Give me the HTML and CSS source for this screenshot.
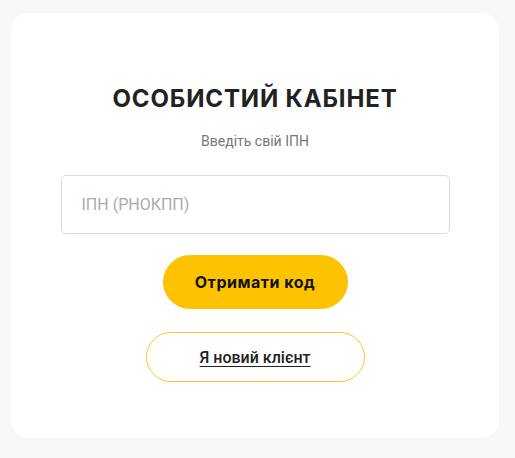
FILE: index.html
```html
<!DOCTYPE html>
<html lang="uk">
<head>
<meta charset="utf-8">
<title>Особистий кабінет</title>
<link rel="stylesheet" href="styles.css">
</head>
<body>
<main class="card">
  <h1 class="title">ОСОБИСТИЙ КАБІНЕТ</h1>
  <p class="subtitle">Введіть свій ІПН</p>
  <input class="field" type="text" placeholder="ІПН (РНОКПП)">
  <button class="btn-primary" type="button">Отримати код</button>
  <a class="btn-outline" href="#">Я новий клієнт</a>
</main>
</body>
</html>
```
FILE: styles.css
```css
html, body {
  margin: 0;
  padding: 0;
}
body {
  background: #f8f8f8;
  font-family: Roboto, "Noto Sans", sans-serif;
}
.card {
  box-sizing: border-box;
  width: 488px;
  height: 425px;
  margin: 13px 0 0 11px;
  background: #ffffff;
  border-radius: 18px;
  display: flex;
  flex-direction: column;
  align-items: center;
  padding-top: 71px;
}
.title {
  margin: 0;
  font-family: Inter, "Open Sans", sans-serif;
  font-weight: 700;
  font-size: 24px;
  line-height: 30px;
  color: #222222;
  letter-spacing: 0.85px;
}
.subtitle {
  margin: 17px 0 0;
  font-size: 14px;
  line-height: 20px;
  color: #777777;
}
.field {
  box-sizing: border-box;
  margin-top: 24px;
  width: 389px;
  height: 59px;
  border: 1px solid #dcdcdc;
  border-radius: 5px;
  padding: 0 20px;
  font-family: Roboto, sans-serif;
  font-size: 16px;
  color: #222;
  outline: none;
}
.field::placeholder {
  color: #aaaaaa;
}
.btn-primary {
  margin-top: 21px;
  width: 185px;
  height: 54px;
  border: none;
  border-radius: 27px;
  background: #fdc300;
  font-family: Inter, "Open Sans", sans-serif;
  font-weight: 700;
  font-size: 16px;
  letter-spacing: 0.5px;
  color: #111111;
  cursor: pointer;
}
.btn-outline {
  box-sizing: border-box;
  margin-top: 23px;
  width: 219px;
  height: 50px;
  border: 1px solid #f2c832;
  border-radius: 25px;
  display: flex;
  align-items: center;
  justify-content: center;
  font-family: Roboto, sans-serif;
  font-weight: 500;
  font-size: 16px;
  color: #222222;
  text-decoration: underline;
  text-underline-offset: 3px;
}
```
